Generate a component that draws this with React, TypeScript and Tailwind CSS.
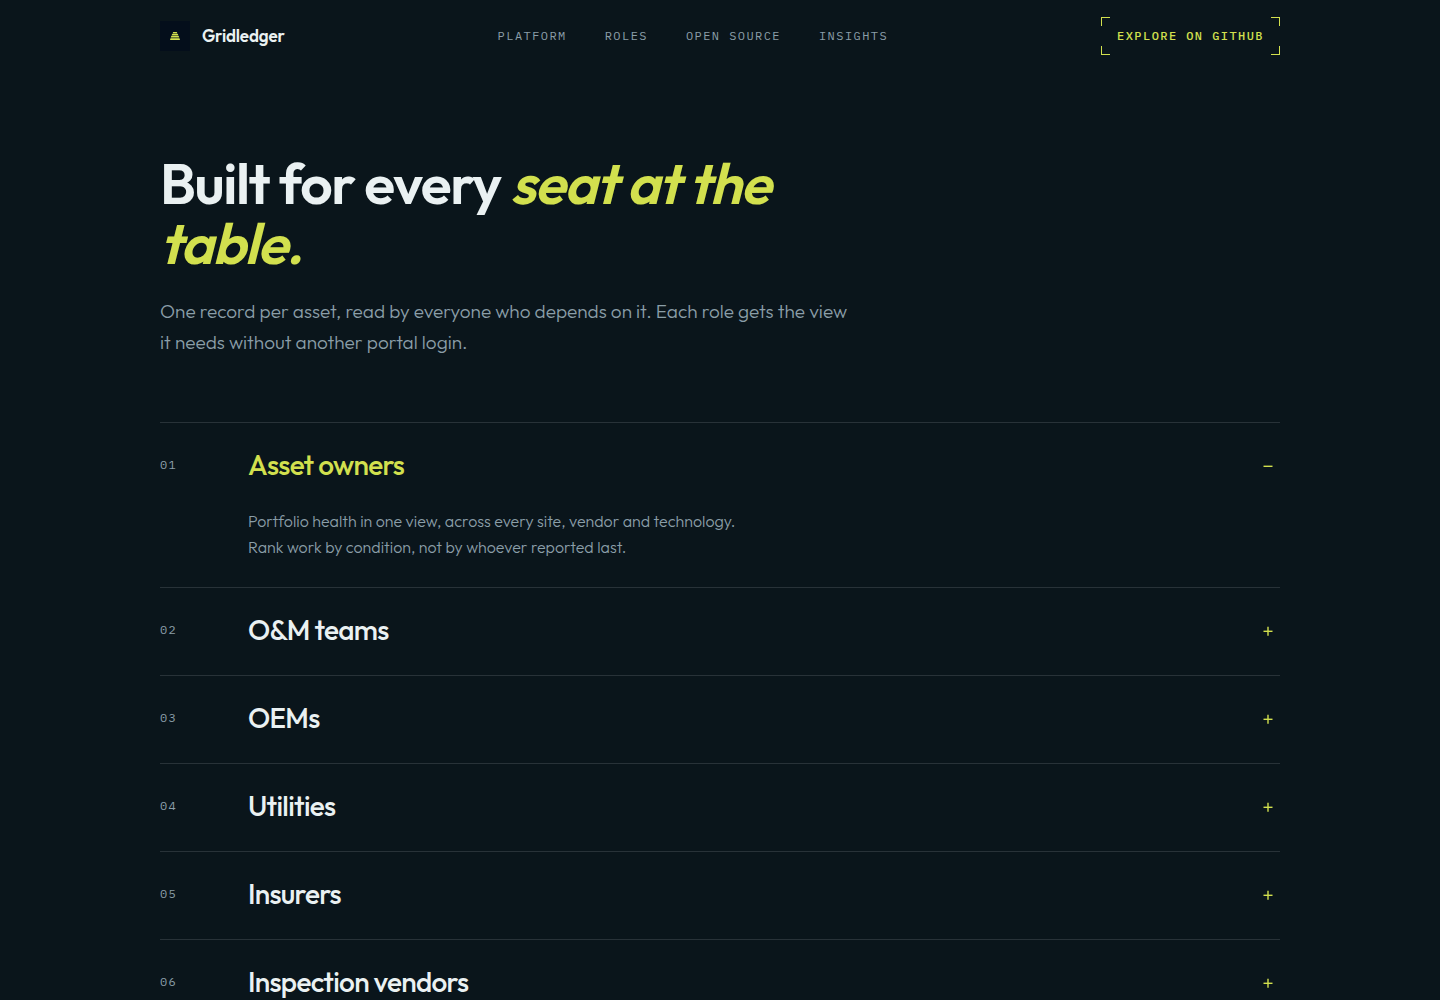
import { useState } from "react";
import { clsx } from "clsx";

const navLinks = [
  { label: "Platform", href: "#platform" },
  { label: "Roles", href: "#roles" },
  { label: "Open source", href: "#open-source" },
  { label: "Insights", href: "#insights" },
];

const roles = [
  {
    title: "Asset owners",
    body: [
      "Portfolio health in one view, across every site, vendor and technology.",
      "Rank work by condition, not by whoever reported last.",
    ],
  },
  { title: "O&M teams", body: [] },
  { title: "OEMs", body: [] },
  { title: "Utilities", body: [] },
  { title: "Insurers", body: [] },
  { title: "Inspection vendors", body: [] },
];

interface RoleRowProps {
  index: number;
  title: string;
  body: string[];
  open: boolean;
  onToggle: () => void;
}

const Logo = () => (
  <a href="#top" className="flex items-center gap-3">
    <span className="flex h-[30px] w-[30px] items-center justify-center bg-[#040e1b]">
      <svg viewBox="0 0 10 8" className="h-2 w-[10px]" fill="#d2e04e" aria-hidden="true">
        <path d="M3.2 0h3.6l.7 1.4h-5zM2.2 2h5.6l.7 1.5h-7zM1.3 4.1h7.4l.6 1.5H.7zM.5 6.2h9l.5 1.8H0z" />
      </svg>
    </span>
    <span className="text-[17px] leading-7 font-semibold tracking-[-0.01em] text-[#eaf1f2]">
      Gridledger
    </span>
  </a>
);

const Header = () => (
  <header className="mx-auto flex h-[72px] max-w-[1120px] items-center justify-between">
    <Logo />
    <nav className="flex gap-[38px] font-['IBM_Plex_Mono','Liberation_Mono',monospace] text-xs tracking-[0.12em] text-[#8a9ea8] uppercase">
      {navLinks.map((link) => (
        <a key={link.label} href={link.href} className="hover:text-[#eaf1f2]">
          {link.label}
        </a>
      ))}
    </nav>
    <a
      href="#github"
      className="relative flex h-[38px] items-center px-4 font-['IBM_Plex_Mono','Liberation_Mono',monospace] text-xs font-medium tracking-[0.12em] text-[#d2e04e] uppercase"
    >
      Explore on GitHub
      <span className="absolute top-0 left-0 h-[9px] w-[9px] border-t border-l border-[#d2e04e]" />
      <span className="absolute top-0 right-0 h-[9px] w-[9px] border-t border-r border-[#d2e04e]" />
      <span className="absolute bottom-0 left-0 h-[9px] w-[9px] border-b border-l border-[#d2e04e]" />
      <span className="absolute right-0 bottom-0 h-[9px] w-[9px] border-r border-b border-[#d2e04e]" />
    </a>
  </header>
);

const RoleRow = ({ index, title, body, open, onToggle }: RoleRowProps) => (
  <li className="border-b border-[#283238] pb-0.5">
    <h3>
      <button
        type="button"
        aria-expanded={open}
        onClick={onToggle}
        className="grid w-full cursor-pointer grid-cols-[64px_1fr_24px] items-center gap-6 pt-6 pb-[25px] text-left"
      >
        <span className="font-['IBM_Plex_Mono','Liberation_Mono',monospace] text-xs tracking-widest text-[#8a9ea8]">
          0{index + 1}
        </span>
        <span
          className={clsx(
            "text-[28px] leading-9 font-medium tracking-tight",
            open ? "text-[#d2e04e]" : "text-[#eaf1f2]",
          )}
        >
          {title}
        </span>
        <svg viewBox="0 0 24 24" className="h-6 w-6" stroke="#d2e04e" strokeWidth="1.4" aria-hidden="true">
          <path d="M7.5 13.3h9" />
          {!open && <path d="M12 8.8v9" />}
        </svg>
      </button>
    </h3>
    {open && body.length > 0 && (
      <div className="pb-[25px] pl-[88px] text-base leading-[26px] font-light text-[#8a9ea8]">
        {body.map((line) => (
          <p key={line}>{line}</p>
        ))}
      </div>
    )}
  </li>
);

const RolesSection = () => {
  const [openIndex, setOpenIndex] = useState(0);

  return (
    <section id="roles" className="mx-auto max-w-[1120px] pt-[81px]">
      <h2 className="max-w-[680px] text-[57px] leading-[60px] font-semibold tracking-tight text-[#eaf1f2]">
        Built for every <em className="text-[#d2e04e]">seat at the table.</em>
      </h2>
      <p className="mt-[23px] max-w-[700px] text-[19px] leading-[31px] font-light text-[#8a9ea8]">
        One record per asset, read by everyone who depends on it. Each role gets the view it
        needs without another portal login.
      </p>
      <ul className="mt-16 border-t border-[#283238]">
        {roles.map((role, i) => (
          <RoleRow
            key={role.title}
            index={i}
            title={role.title}
            body={role.body}
            open={openIndex === i}
            onToggle={() => setOpenIndex(openIndex === i ? -1 : i)}
          />
        ))}
      </ul>
    </section>
  );
};

const App = () => (
  <div id="top" className="min-h-screen bg-[#0a151b] font-[Outfit,Lato,sans-serif]">
    <Header />
    <main>
      <RolesSection />
    </main>
  </div>
);

export default App;
